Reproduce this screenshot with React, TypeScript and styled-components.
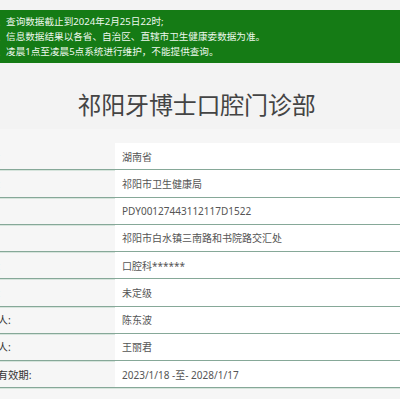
import React from 'react';
import styled, { createGlobalStyle } from 'styled-components';

const GlobalStyle = createGlobalStyle`
  html, body {
    margin: 0;
    padding: 0;
    background: #f3f3f3;
    overflow: hidden;
  }
  body {
    font-family: "Noto Sans", "Noto Sans CJK SC", sans-serif;
  }
`;

const Page = styled.div`
  width: 400px;
  height: 399px;
  overflow: hidden;
  background: #f3f3f3;
`;

const Sheet = styled.div`
  margin-left: -62px;
  width: 524px;
  padding-top: 10px;
`;

const Notice = styled.ol`
  list-style: none;
  margin: 0;
  padding: 4px 0 4px 53px;
  background: #157b15;
  color: #eef8ee;
  font-size: 9.6px;
  line-height: 15px;
`;

const NoticeItem = styled.li`
  white-space: nowrap;
`;

const Header = styled.div`
  padding: 26px 7px 8px 0;
  text-align: center;
`;

const Title = styled.h1`
  margin: 0;
  font-size: 24px;
  line-height: 32px;
  font-weight: 400;
  color: #444;
  letter-spacing: -0.2px;
`;

const Content = styled.div`
  background: #f6f6f6;
  padding: 14px 0 20px;
`;

const Table = styled.div`
  display: flex;
  flex-direction: column;
`;

const Row = styled.div`
  display: grid;
  grid-template-columns: 177px 1fr;
  height: 27.25px;
  box-sizing: border-box;
  border-bottom: 1px solid #86a898;
  box-shadow: 0 1px 0 #d6e4dc;
`;

const Label = styled.div`
  display: flex;
  align-items: center;
  padding-left: 18px;
  font-size: 10.4px;
  color: #333;
  white-space: nowrap;
`;

const Value = styled.div`
  display: flex;
  align-items: center;
  padding-left: 7px;
  background: #fff;
  font-size: 10px;
  color: #555;
  white-space: nowrap;
`;

const notices = [
  '1、查询数据截止到2024年2月25日22时;',
  '2、信息数据结果以各省、自治区、直辖市卫生健康委数据为准。',
  '3、凌晨1点至凌晨5点系统进行维护，不能提供查询。',
];

const rows: [string, string][] = [
  ['所在省份:', '湖南省'],
  ['登记机关:', '祁阳市卫生健康局'],
  ['登记号:', 'PDY00127443112117D1522'],
  ['地址:', '祁阳市白水镇三南路和书院路交汇处'],
  ['诊疗科目:', '口腔科******'],
  ['医院等级:', '未定级'],
  ['法定代表人:', '陈东波'],
  ['主要负责人:', '王丽君'],
  ['执业许可有效期:', '2023/1/18 -至- 2028/1/17'],
];

export default function App() {
  return (
    <>
      <GlobalStyle />
      <Page>
        <Sheet>
          <Notice>
            {notices.map((n) => (
              <NoticeItem key={n}>{n}</NoticeItem>
            ))}
          </Notice>
          <Header>
            <Title>祁阳牙博士口腔门诊部</Title>
          </Header>
          <Content>
            <Table>
              {rows.map(([label, value]) => (
                <Row key={label}>
                  <Label>{label}</Label>
                  <Value>{value}</Value>
                </Row>
              ))}
            </Table>
          </Content>
        </Sheet>
      </Page>
    </>
  );
}
